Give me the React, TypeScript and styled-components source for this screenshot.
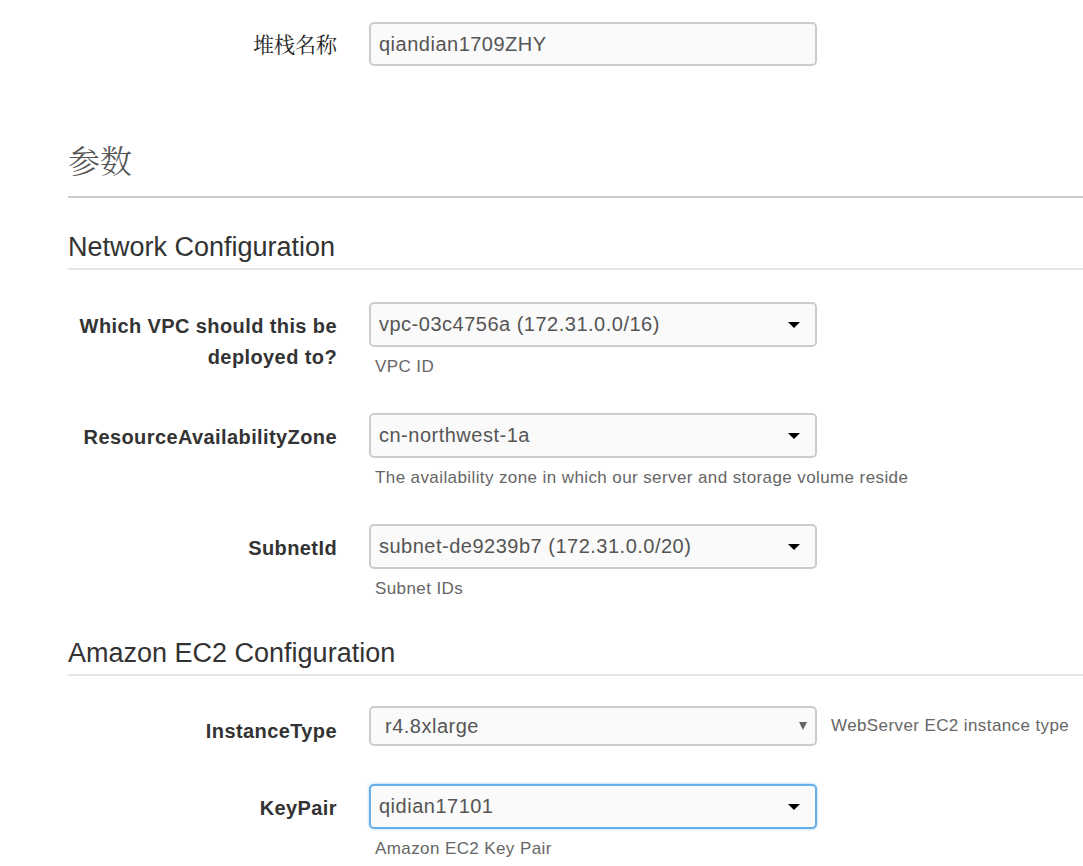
import React from "react";
import styled, { createGlobalStyle, css } from "styled-components";

const GlobalStyle = createGlobalStyle`
  html, body {
    margin: 0;
    padding: 0;
    background: #fff;
  }
  body {
    font-family: "Liberation Sans", Arial, "Noto Sans CJK SC", sans-serif;
    color: #333;
    overflow: hidden;
  }
`;

const Page = styled.div`
  padding: 22px 0 0 68px;
  width: 1083px;
  box-sizing: border-box;
`;

const Row = styled.div<{ $mb?: number }>`
  display: grid;
  grid-template-columns: 269px 448px auto;
  column-gap: 32px;
  align-items: start;
  margin-bottom: ${(p) => (p.$mb ?? 36)}px;
`;

const Label = styled.label<{ $cjk?: boolean; $pt?: number }>`
  text-align: right;
  font-size: 20px;
  letter-spacing: 0.4px;
  font-weight: bold;
  line-height: 31px;
  padding-top: ${(p) => p.$pt ?? 9}px;
  color: #333;
  white-space: nowrap;
  ${(p) =>
    p.$cjk &&
    css`
      font-family: "Noto Serif CJK SC", "Noto Sans CJK SC", serif;
      font-weight: normal;
      letter-spacing: 0;
      font-size: 21px;
      padding-top: 6px;
      color: #222;
    `}
`;

const Control = styled.div`
  display: flex;
  flex-direction: column;
`;

const fieldBase = css`
  box-sizing: border-box;
  width: 448px;
  border: 2px solid #ccc;
  border-radius: 5px;
  background: #fafafa;
  color: #555;
  font-size: 20px;
  letter-spacing: 0.5px;
  display: flex;
  align-items: center;
  position: relative;
`;

const TextBox = styled.div`
  ${fieldBase};
  height: 44px;
  padding-left: 8px;
`;

const Select = styled.div<{ $focus?: boolean; $native?: boolean }>`
  ${fieldBase};
  height: ${(p) => (p.$native ? 40 : 45)}px;
  padding-left: ${(p) => (p.$native ? 14 : 8)}px;
  ${(p) =>
    p.$focus &&
    css`
      border-color: #66afe9;
      box-shadow: 0 0 3px rgba(102, 175, 233, 0.7);
    `}
`;

const Caret = styled.span<{ $native?: boolean }>`
  position: absolute;
  right: ${(p) => (p.$native ? 8 : 15)}px;
  top: 50%;
  width: 0;
  height: 0;
  ${(p) =>
    p.$native
      ? css`
          margin-top: -4px;
          border-left: 4px solid transparent;
          border-right: 4px solid transparent;
          border-top: 8px solid #666;
        `
      : css`
          margin-top: -3px;
          border-left: 6px solid transparent;
          border-right: 6px solid transparent;
          border-top: 6px solid #000;
        `}
`;

const Help = styled.div`
  font-size: 17px;
  letter-spacing: 0.4px;
  color: #666;
  line-height: 20px;
  margin-top: 10px;
  padding-left: 6px;
  white-space: nowrap;
`;

const SideHelp = styled.div`
  font-size: 17px;
  letter-spacing: 0.4px;
  color: #666;
  line-height: 40px;
  margin-left: -18px;
  white-space: nowrap;
`;

const SectionTitle = styled.h2`
  margin: 76px 0 0;
  padding-bottom: 19px;
  font-family: "Noto Serif CJK SC", "Noto Sans CJK SC", serif;
  font-weight: 300;
  font-size: 32px;
  line-height: 35px;
  color: #555;
  border-bottom: 2px solid #ccc;
`;

const GroupTitle = styled.h3<{ $mt: number; $mb: number }>`
  margin: ${(p) => p.$mt}px 0 ${(p) => p.$mb}px;
  padding-bottom: 6px;
  font-size: 27px;
  font-weight: normal;
  line-height: 30px;
  color: #333;
  border-bottom: 2px solid #e6e6e6;
`;

type Field = {
  label: React.ReactNode;
  value: string;
  help?: string;
  side?: string;
  focus?: boolean;
  native?: boolean;
  mb?: number;
  pt?: number;
};

const SelectRow = ({ label, value, help, side, focus, native, mb, pt }: Field) => (
  <Row $mb={mb}>
    <Label $pt={pt}>{label}</Label>
    <Control>
      <Select $focus={focus} $native={native}>
        {value}
        <Caret $native={native} />
      </Select>
      {help && <Help>{help}</Help>}
    </Control>
    {side && <SideHelp>{side}</SideHelp>}
  </Row>
);

export default function App() {
  return (
    <Page>
      <GlobalStyle />
      <Row $mb={0}>
        <Label $cjk>堆栈名称</Label>
        <Control>
          <TextBox>qiandian1709ZHY</TextBox>
        </Control>
      </Row>

      <SectionTitle>参数</SectionTitle>

      <GroupTitle $mt={34} $mb={32}>
        Network Configuration
      </GroupTitle>
      <SelectRow
        label={
          <>
            Which VPC should this be
            <br />
            deployed to?
          </>
        }
        value="vpc-03c4756a (172.31.0.0/16)"
        help="VPC ID"
      />
      <SelectRow
        label="ResourceAvailabilityZone"
        value="cn-northwest-1a"
        help="The availability zone in which our server and storage volume reside"
      />
      <SelectRow
        label="SubnetId"
        value="subnet-de9239b7 (172.31.0.0/20)"
        help="Subnet IDs"
        mb={0}
      />

      <GroupTitle $mt={39} $mb={30}>
        Amazon EC2 Configuration
      </GroupTitle>
      <SelectRow
        label="InstanceType"
        value="r4.8xlarge"
        side="WebServer EC2 instance type"
        native
        pt={10}
        mb={37}
      />
      <SelectRow
        label="KeyPair"
        value="qidian17101"
        help="Amazon EC2 Key Pair"
        focus
      />
    </Page>
  );
}
